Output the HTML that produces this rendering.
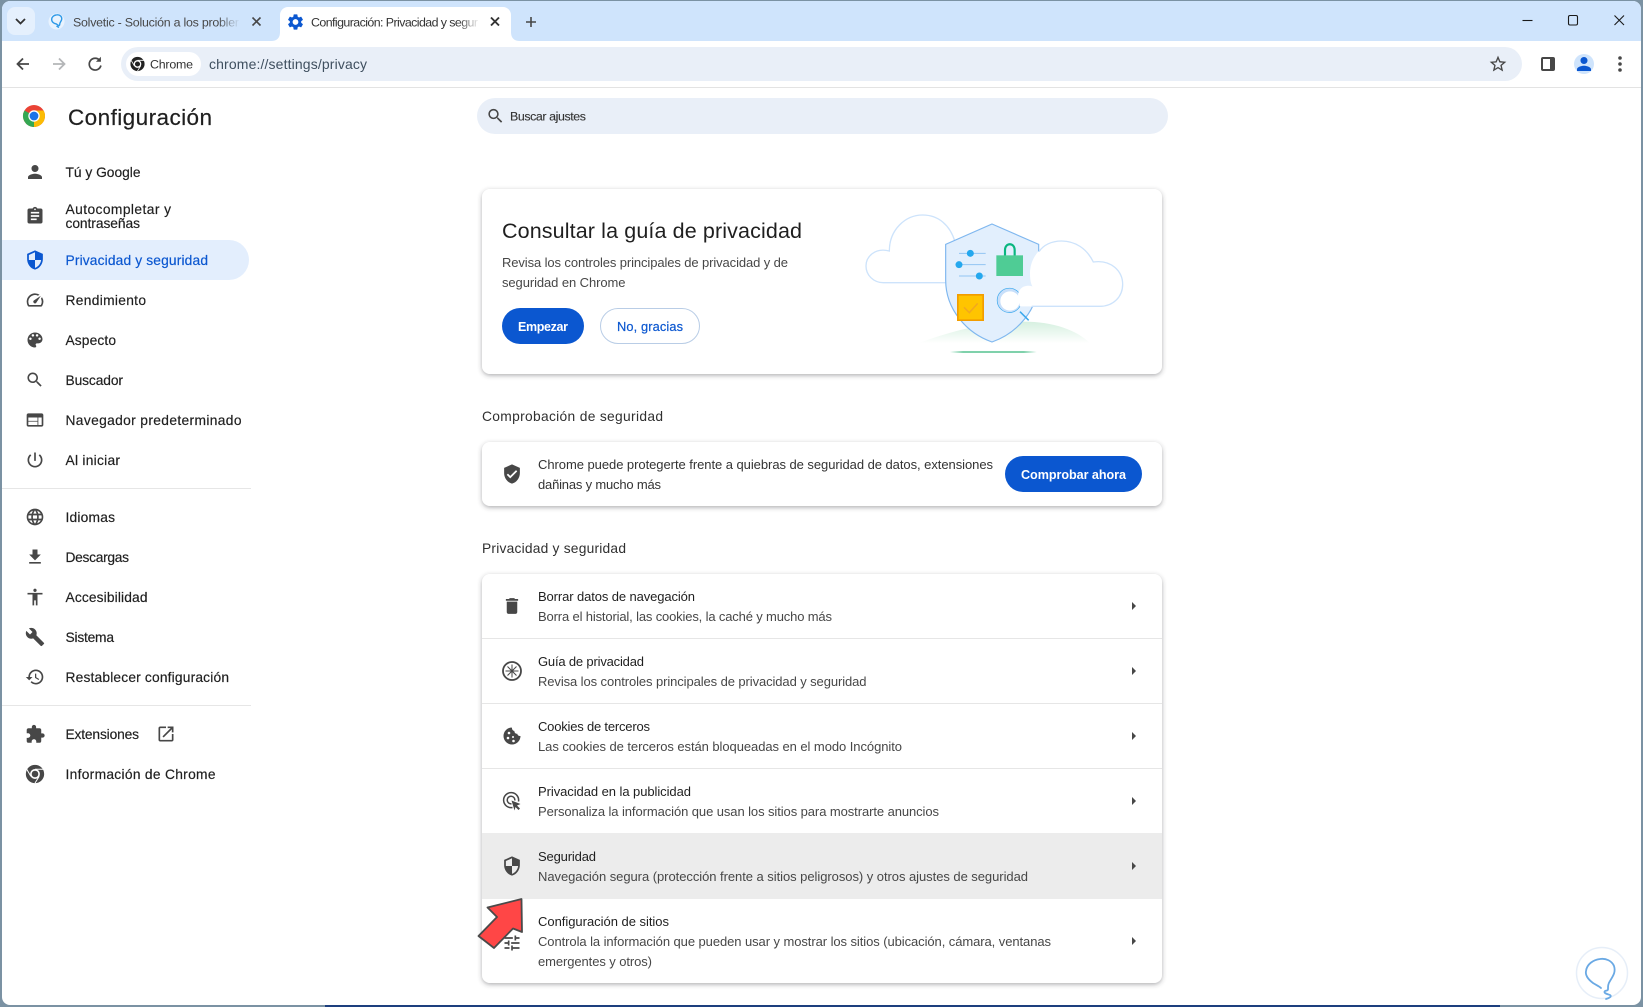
<!DOCTYPE html>
<html lang="es"><head><meta charset="utf-8"><title>Configuración</title>
<style>
html,body{margin:0;padding:0;background:#fff;width:1643px;height:1007px;overflow:hidden}
svg{display:block;position:absolute;left:0;top:0}
text{font-family:"Liberation Sans",Arial,sans-serif;font-size:13.4px;fill:#1f1f1f;white-space:pre}
.n{font-size:13.8px;fill:#1f1f1f;stroke:#1f1f1f;stroke-width:.18px}
.t{font-size:13px;fill:#1f1f1f}
.s{font-size:13px;fill:#474747}
.h{font-size:13.8px;fill:#303030}
.tab{font-size:12.4px;fill:#474747}
</style></head><body>
<svg width="1643" height="1007" viewBox="0 0 1643 1007" xmlns="http://www.w3.org/2000/svg">
<defs>
<filter id="sh" x="-5%" y="-10%" width="110%" height="125%"><feDropShadow dx="0" dy="1.5" stdDeviation="2.4" flood-color="#3c4043" flood-opacity=".42"/></filter>
<linearGradient id="fd1"><stop offset="0" stop-color="#cfe4fc" stop-opacity="0"/><stop offset="1" stop-color="#cfe4fc"/></linearGradient>
<linearGradient id="fd2"><stop offset="0" stop-color="#fff" stop-opacity="0"/><stop offset="1" stop-color="#fff"/></linearGradient>
<linearGradient id="hill" x1="0" y1="0" x2="0" y2="1"><stop offset="0" stop-color="#d6f0e0"/><stop offset="1" stop-color="#fff"/></linearGradient>
<linearGradient id="strip"><stop offset="0" stop-color="#7fd1ab" stop-opacity="0"/><stop offset=".15" stop-color="#7fd1ab"/><stop offset=".85" stop-color="#7fd1ab"/><stop offset="1" stop-color="#7fd1ab" stop-opacity="0"/></linearGradient>
<symbol id="person" viewBox="0 0 24 24"><path d="M12 12c2.21 0 4-1.79 4-4s-1.79-4-4-4-4 1.79-4 4 1.79 4 4 4zm0 2c-2.67 0-8 1.34-8 4v2h16v-2c0-2.66-5.33-4-8-4z"/></symbol>
<symbol id="assign" viewBox="0 0 24 24"><path d="M19 3h-4.18C14.4 1.84 13.3 1 12 1c-1.3 0-2.4.84-2.82 2H5c-1.1 0-2 .9-2 2v14c0 1.1.9 2 2 2h14c1.1 0 2-.9 2-2V5c0-1.1-.9-2-2-2zm-7 0c.55 0 1 .45 1 1s-.45 1-1 1-1-.45-1-1 .45-1 1-1zm2 14H7v-2h7v2zm3-4H7v-2h10v2zm0-4H7V7h10v2z"/></symbol>
<symbol id="shield" viewBox="0 0 24 24"><path d="M12 1L3 5v6c0 5.55 3.84 10.74 9 12 5.16-1.26 9-6.45 9-12V5l-9-4zm0 10.99h7c-.53 4.12-3.28 7.79-7 8.94V12H5V6.3l7-3.11v8.8z"/></symbol>
<symbol id="speed" viewBox="0 0 24 24"><path d="M20.38 8.57l-1.23 1.85a8 8 0 0 1-.22 7.58H5.07A8 8 0 0 1 15.58 6.85l1.85-1.23A10 10 0 0 0 3.35 19a2 2 0 0 0 1.72 1h13.85a2 2 0 0 0 1.74-1 10 10 0 0 0-.27-10.44zm-9.79 6.84a2 2 0 0 0 2.83 0l5.66-8.49-8.49 5.66a2 2 0 0 0 0 2.83z"/></symbol>
<symbol id="palette" viewBox="0 0 24 24"><path d="M12 3c-4.97 0-9 4.03-9 9s4.03 9 9 9c.83 0 1.5-.67 1.5-1.5 0-.39-.15-.74-.39-1.01-.23-.26-.38-.61-.38-.99 0-.83.67-1.5 1.5-1.5H16c2.76 0 5-2.24 5-5 0-4.42-4.03-8-9-8zm-5.5 9c-.83 0-1.5-.67-1.5-1.5S5.67 9 6.5 9 8 9.67 8 10.5 7.33 12 6.5 12zm3-4C8.67 8 8 7.33 8 6.5S8.67 5 9.5 5s1.5.67 1.5 1.5S10.33 8 9.5 8zm5 0c-.83 0-1.5-.67-1.5-1.5S13.67 5 14.5 5s1.5.67 1.5 1.5S15.33 8 14.5 8zm3 4c-.83 0-1.5-.67-1.5-1.5S16.67 9 17.5 9s1.5.67 1.5 1.5-.67 1.5-1.5 1.5z"/></symbol>
<symbol id="search" viewBox="0 0 24 24"><path d="M15.5 14h-.79l-.28-.27C15.41 12.59 16 11.11 16 9.5 16 5.91 13.09 3 9.5 3S3 5.91 3 9.5 5.91 16 9.5 16c1.61 0 3.09-.59 4.23-1.57l.27.28v.79l5 4.99L20.49 19l-4.99-5zm-6 0C7.01 14 5 11.99 5 9.5S7.01 5 9.5 5 14 7.01 14 9.5 11.99 14 9.5 14z"/></symbol>
<symbol id="web" viewBox="0 0 24 24"><path d="M20 4H4c-1.1 0-1.99.9-1.99 2L2 18c0 1.1.9 2 2 2h16c1.1 0 2-.9 2-2V6c0-1.1-.9-2-2-2zm-5 14H4v-4h11v4zm0-5H4V9h11v4zm5 5h-4V9h4v9z"/></symbol>
<symbol id="power" viewBox="0 0 24 24"><path d="M13 3h-2v10h2V3zm4.83 2.17l-1.42 1.42C17.99 7.86 19 9.81 19 12c0 3.87-3.13 7-7 7s-7-3.13-7-7c0-2.19 1.01-4.14 2.58-5.42L6.17 5.17C4.23 6.82 3 9.26 3 12c0 4.97 4.03 9 9 9s9-4.03 9-9c0-2.74-1.23-5.18-3.17-6.83z"/></symbol>
<symbol id="lang" viewBox="0 0 24 24"><path d="M11.99 2C6.47 2 2 6.48 2 12s4.47 10 9.99 10C17.52 22 22 17.52 22 12S17.52 2 11.99 2zm6.93 6h-2.95c-.32-1.25-.78-2.45-1.38-3.56 1.84.63 3.37 1.91 4.33 3.56zM12 4.04c.83 1.2 1.48 2.53 1.91 3.96h-3.82c.43-1.43 1.08-2.76 1.91-3.96zM4.26 14C4.1 13.36 4 12.69 4 12s.1-1.36.26-2h3.38c-.08.66-.14 1.32-.14 2 0 .68.06 1.34.14 2H4.26zm.82 2h2.95c.32 1.25.78 2.45 1.38 3.56-1.84-.63-3.37-1.9-4.33-3.56zm2.95-8H5.08c.96-1.66 2.49-2.93 4.33-3.56C8.81 5.55 8.35 6.75 8.03 8zM12 19.96c-.83-1.2-1.48-2.53-1.91-3.96h3.82c-.43 1.43-1.08 2.76-1.91 3.96zM14.34 14H9.66c-.09-.66-.16-1.32-.16-2 0-.68.07-1.35.16-2h4.68c.09.65.16 1.32.16 2 0 .68-.07 1.34-.16 2zm.25 5.56c.6-1.11 1.06-2.31 1.38-3.56h2.95c-.96 1.65-2.49 2.93-4.33 3.56zM16.36 14c.08-.66.14-1.32.14-2 0-.68-.06-1.34-.14-2h3.38c.16.64.26 1.31.26 2s-.1 1.36-.26 2h-3.38z"/></symbol>
<symbol id="dl" viewBox="0 0 24 24"><path d="M19 9h-4V3H9v6H5l7 7 7-7zM5 18v2h14v-2H5z"/></symbol>
<symbol id="acc" viewBox="0 0 24 24"><path d="M12 2c1.1 0 2 .9 2 2s-.9 2-2 2-2-.9-2-2 .9-2 2-2zm9 7h-6v13h-2v-6h-2v6H9V9H3V7h18v2z"/></symbol>
<symbol id="build" viewBox="0 0 24 24"><path d="M22.7 19l-9.1-9.1c.9-2.3.4-5-1.5-6.9-2-2-5-2.4-7.4-1.3L9 6 6 9 1.6 4.7C.4 7.1.9 10.1 2.9 12.1c1.9 1.9 4.6 2.4 6.9 1.5l9.1 9.1c.4.4 1 .4 1.4 0l2.3-2.3c.5-.4.5-1.1.1-1.4z"/></symbol>
<symbol id="restore" viewBox="0 0 24 24"><path d="M13 3c-4.97 0-9 4.03-9 9H1l3.89 3.89.07.14L9 12H6c0-3.87 3.13-7 7-7s7 3.13 7 7-3.13 7-7 7c-1.93 0-3.68-.79-4.94-2.06l-1.42 1.42C8.27 19.99 10.51 21 13 21c4.97 0 9-4.03 9-9s-4.03-9-9-9zm-1 5v5l4.28 2.54.72-1.21-3.5-2.08V8H12z"/></symbol>
<symbol id="ext" viewBox="0 0 24 24"><path d="M20.5 11H19V7c0-1.1-.9-2-2-2h-4V3.5C13 2.12 11.88 1 10.5 1S8 2.12 8 3.5V5H4c-1.1 0-1.99.9-1.99 2v3.8H3.5c1.49 0 2.7 1.21 2.7 2.7s-1.21 2.7-2.7 2.7H2V20c0 1.1.9 2 2 2h3.8v-1.5c0-1.49 1.21-2.7 2.7-2.7 1.49 0 2.7 1.21 2.7 2.7V22H17c1.1 0 2-.9 2-2v-4h1.5c1.38 0 2.5-1.12 2.5-2.5S21.88 11 20.5 11z"/></symbol>
<symbol id="open" viewBox="0 0 24 24"><path d="M19 19H5V5h7V3H5c-1.11 0-2 .9-2 2v14c0 1.1.89 2 2 2h14c1.1 0 2-.9 2-2v-7h-2v7zM14 3v2h3.59l-9.83 9.83 1.41 1.41L19 6.41V10h2V3h-7z"/></symbol>
<symbol id="del" viewBox="0 0 24 24"><path d="M6 19c0 1.1.9 2 2 2h8c1.1 0 2-.9 2-2V7H6v12zM19 4h-3.5l-1-1h-5l-1 1H5v2h14V4z"/></symbol>
<symbol id="ver" viewBox="0 0 24 24"><path d="M12 1L3 5v6c0 5.55 3.84 10.74 9 12 5.16-1.26 9-6.45 9-12V5l-9-4zm-2 16l-4-4 1.41-1.41L10 14.17l6.59-6.59L18 9l-8 8z"/></symbol>
<symbol id="tune" viewBox="0 0 24 24"><path d="M3 17v2h6v-2H3zM3 5v2h10V5H3zm10 16v-2h8v-2h-8v-2h-2v6h2zM7 9v2H3v2h4v2h2V9H7zm14 4v-2H11v2h10zm-6-4h2V7h4V5h-4V3h-2v6z"/></symbol>
<symbol id="star" viewBox="0 0 24 24"><path d="M22 9.24l-7.19-.62L12 2 9.19 8.63 2 9.24l5.46 4.73L5.82 21 12 17.27 18.18 21l-1.63-7.03L22 9.24zM12 15.4l-3.76 2.27 1-4.28-3.32-2.88 4.38-.38L12 6.1l1.71 4.04 4.38.38-3.32 2.88 1 4.28L12 15.4z"/></symbol>
<symbol id="gear" viewBox="0 0 24 24"><path d="M19.14 12.94c.04-.3.06-.61.06-.94 0-.32-.02-.64-.07-.94l2.03-1.58c.18-.14.23-.41.12-.61l-1.92-3.32c-.12-.22-.37-.29-.59-.22l-2.39.96c-.5-.38-1.03-.7-1.62-.94l-.36-2.54c-.04-.24-.24-.41-.48-.41h-3.84c-.24 0-.43.17-.47.41l-.36 2.54c-.59.24-1.13.57-1.62.94l-2.39-.96c-.22-.08-.47 0-.59.22L2.74 8.87c-.12.21-.08.47.12.61l2.03 1.58c-.05.3-.09.63-.09.94s.02.64.07.94l-2.03 1.58c-.18.14-.23.41-.12.61l1.92 3.32c.12.22.37.29.59.22l2.39-.96c.5.38 1.03.7 1.62.94l.36 2.54c.05.24.24.41.48.41h3.84c.24 0 .44-.17.47-.41l.36-2.54c.59-.24 1.13-.56 1.62-.94l2.39.96c.22.08.47 0 .59-.22l1.92-3.32c.12-.22.07-.47-.12-.61l-2.01-1.58zM12 15.6c-1.98 0-3.6-1.62-3.6-3.6s1.62-3.6 3.6-3.6 3.6 1.62 3.6 3.6-1.62 3.6-3.6 3.6z"/></symbol>
<symbol id="chromeg" viewBox="0 0 24 24"><circle cx="12" cy="12" r="10" fill="currentColor"/><circle cx="12" cy="12" r="5.4" fill="#fff"/><circle cx="12" cy="12" r="3.6" fill="currentColor"/><path d="M12 6.8h9M7.5 14.6L3 6.8M16.5 14.6L12 22" stroke="#fff" stroke-width="1.1" fill="none"/></symbol>
</defs>

<!-- window frame -->
<rect width="1643" height="1007" fill="#7b92a3"/>
<rect x="325" y="1004" width="1175" height="3" fill="#1d3f7e"/>
<path d="M10 1H1633a8 8 0 0 1 8 8V997a8 8 0 0 1-8 8H10a8 8 0 0 1-8-8V9a8 8 0 0 1 8-8z" fill="#fff"/>
<!-- tab strip -->
<path d="M10 1H1633a8 8 0 0 1 8 8V41H2V9a8 8 0 0 1 8-8z" fill="#cfe4fc"/>
<rect x="7" y="7" width="28" height="28" rx="8" fill="#e5f0fd"/>
<path d="M16 19l4.500 4.500 4.500-4.500" fill="none" stroke="#333" stroke-width="1.800"/>
<!-- tab1 -->
<circle cx="56.5" cy="21.5" r="8" fill="#e9f3fe"/>
<path d="M56 15c4-1 6.500 2 5.500 5-.5 1.500-1.800 2.500-1.800 4.500 0 1-.8 1.400-1.800 .6l-1.500-1.100c-3-.5-5-2.500-4.700-5 .2-2 2-3.700 4.300-4z M56.500 26l2.500 1.500" fill="none" stroke="#2f9ae8" stroke-width="1.400"/>
<text class="tab" x="73" y="26.500" textLength="166">Solvetic - Solución a los probler</text>
<rect x="218" y="10" width="22" height="24" fill="url(#fd1)"/>
<path d="M252.500 17.500l8 8m0-8l-8 8" stroke="#474747" stroke-width="1.600"/>
<!-- tab2 -->
<path d="M271 41c6 0 9-3 9-9V15a8 8 0 0 1 8-8h215a8 8 0 0 1 8 8v17c0 6 3 9 9 9z" fill="#fff"/>
<use href="#gear" x="286" y="12.500" width="19" height="19" fill="#0b57d0"/>
<text class="tab" x="311" y="26.500" style="fill:#333" textLength="167">Configuración: Privacidad y segur</text>
<rect x="458" y="10" width="22" height="24" fill="url(#fd2)"/>
<path d="M491 17.500l8 8m0-8l-8 8" stroke="#333" stroke-width="1.900"/>
<path d="M531 17v10M526 22h10" stroke="#474747" stroke-width="1.600"/>
<!-- win controls -->
<path d="M1522.500 20.500h10" stroke="#1a1a1a" stroke-width="1.100"/>
<rect x="1568.500" y="15.500" width="9" height="9.500" rx="1.500" fill="none" stroke="#1a1a1a" stroke-width="1.100"/>
<path d="M1614.500 15.500l9.500 9.500m0-9.500l-9.500 9.500" stroke="#1a1a1a" stroke-width="1.100"/>
<!-- toolbar -->
<path d="M2 49a8 8 0 0 1 8-8H1633a8 8 0 0 1 8 8V87H2z" fill="#fff"/>
<rect x="2" y="87" width="1639" height="1" fill="#e3e3e3"/>
<path d="M29 64H18M23 58.500L17.500 64l5.500 5.500" fill="none" stroke="#474747" stroke-width="1.800"/>
<path d="M53 64h11M59 58.500l5.500 5.500-5.500 5.500" fill="none" stroke="#b4b6b8" stroke-width="1.800"/>
<path d="M99.800 60.500A5.900 5.900 0 1 0 100.900 65.500" fill="none" stroke="#474747" stroke-width="1.700"/><path d="M100.900 56.800v5h-5z" fill="#474747"/>
<rect x="121" y="47" width="1401" height="34" rx="17" fill="#e9eff8"/>
<rect x="126" y="52" width="75" height="24" rx="12" fill="#fff"/>
<use href="#chromeg" x="129" y="55.500" width="17" height="17" style="color:#222"/>
<text x="150" y="68.500" style="font-size:12.400px;fill:#333" textLength="43">Chrome</text>
<text x="209" y="69" style="font-size:14px;fill:#3f4f5f" textLength="158">chrome://settings/privacy</text>
<use href="#star" x="1488" y="54" width="20" height="20" fill="#474747"/>
<path d="M1541 59a2 2 0 0 1 2-2h10a2 2 0 0 1 2 2v10a2 2 0 0 1-2 2h-10a2 2 0 0 1-2-2z" fill="#474747"/><rect x="1543" y="59" width="7" height="10" fill="#fff"/>
<circle cx="1584" cy="64" r="10" fill="#cfe4fc"/><use href="#person" x="1573.500" y="53.500" width="21" height="21" fill="#0b57d0"/>
<circle cx="1620" cy="58" r="1.800" fill="#474747"/><circle cx="1620" cy="64" r="1.800" fill="#474747"/><circle cx="1620" cy="70" r="1.800" fill="#474747"/>

<!-- header -->
<circle cx="34" cy="116" r="11" fill="#ea4335"/>
<path d="M34 116L24.500 121.500A11 11 0 0 0 34 127z" fill="#34a853"/><path d="M24.500 110.500A11 11 0 0 0 24.500 121.500L29.500 119 34 116z" fill="#34a853"/>
<path d="M34 116V127A11 11 0 0 0 45 116c0-2-.5-3.800-1.500-5.500H34z" fill="#fbbc04"/>
<circle cx="34" cy="116" r="5.700" fill="#fff"/><circle cx="34" cy="116" r="4.400" fill="#1a73e8"/>
<text x="68" y="125" style="font-size:22.500px;fill:#1f1f1f;stroke:#1f1f1f;stroke-width:.2px" textLength="144">Configuración</text>
<rect x="477" y="98" width="691" height="36" rx="18" fill="#e9eff8"/>
<use href="#search" x="486" y="106.500" width="19" height="19" fill="#474747"/>
<text x="510" y="120.500" style="font-size:12.400px;fill:#333;stroke:#333;stroke-width:.12px" textLength="76">Buscar ajustes</text>

<!-- sidebar -->
<path d="M2 240H229a20 20 0 0 1 0 40H2z" fill="#e3eefd"/>
<use href="#person" x="24.500" y="161.500" width="21" height="21" fill="#474747"/>
<text class="n" x="65.500" y="177" textLength="75">Tú y Google</text>
<use href="#assign" x="25" y="206" width="20" height="20" fill="#474747"/>
<text class="n" x="65.500" y="214" textLength="105.500">Autocompletar y</text>
<text class="n" x="65.500" y="228" textLength="74.500">contraseñas</text>
<use href="#shield" x="24.500" y="249.500" width="21" height="21" fill="#0b57d0"/>
<text class="n" x="65.500" y="265" style="fill:#0b57d0;stroke:#0b57d0" textLength="142.500">Privacidad y seguridad</text>
<use href="#speed" x="25" y="290" width="20" height="20" fill="#474747"/>
<text class="n" x="65.500" y="305" textLength="80.500">Rendimiento</text>
<use href="#palette" x="25" y="330" width="20" height="20" fill="#474747"/>
<text class="n" x="65.500" y="345" textLength="50.500">Aspecto</text>
<use href="#search" x="25" y="370" width="19.500" height="19.500" fill="#474747"/>
<text class="n" x="65.500" y="385" textLength="57.500">Buscador</text>
<use href="#web" x="25" y="410" width="20" height="20" fill="#474747"/>
<text class="n" x="65.500" y="425" textLength="176">Navegador predeterminado</text>
<use href="#power" x="25" y="450" width="20" height="20" fill="#474747"/>
<text class="n" x="65.500" y="465" textLength="54.500">Al iniciar</text>
<rect x="2" y="488" width="249" height="1" fill="#e6e6e6"/>
<use href="#lang" x="25" y="507" width="20" height="20" fill="#474747"/>
<text class="n" x="65.500" y="522" textLength="49.500">Idiomas</text>
<use href="#dl" x="25" y="547" width="20" height="20" fill="#474747"/>
<text class="n" x="65.500" y="562" textLength="63.500">Descargas</text>
<use href="#acc" x="25" y="587" width="20" height="20" fill="#474747"/>
<text class="n" x="65.500" y="602" textLength="82">Accesibilidad</text>
<use href="#build" x="25" y="627" width="20" height="20" fill="#474747"/>
<text class="n" x="65.500" y="642" textLength="48.500">Sistema</text>
<use href="#restore" x="25" y="667" width="20" height="20" fill="#474747"/>
<text class="n" x="65.500" y="682" textLength="163.500">Restablecer configuración</text>
<rect x="2" y="705" width="249" height="1" fill="#e6e6e6"/>
<use href="#ext" x="25" y="724" width="20.500" height="20.500" fill="#474747"/>
<text class="n" x="65.500" y="739" textLength="73.500">Extensiones</text>
<use href="#open" x="156" y="724" width="20" height="20" fill="#474747"/>
<use href="#chromeg" x="24" y="763" width="22" height="22" style="color:#474747"/>
<text class="n" x="65.500" y="779" textLength="150">Información de Chrome</text>

<!-- card 1 -->
<rect x="482" y="189" width="680" height="185" rx="8" fill="#fff" filter="url(#sh)"/>
<text x="502" y="238" style="font-size:21.500px;fill:#1f1f1f" textLength="300">Consultar la guía de privacidad</text>
<text class="s" x="502" y="267" textLength="286">Revisa los controles principales de privacidad y de</text>
<text class="s" x="502" y="287" textLength="123.500">seguridad en Chrome</text>
<rect x="502" y="308" width="82" height="36" rx="18" fill="#0b57d0"/>
<text x="518" y="331" style="font-size:12.500px;fill:#fff;font-weight:bold" textLength="50">Empezar</text>
<rect x="600.500" y="308.500" width="99" height="35" rx="17.500" fill="#fff" stroke="#b9cde6"/>
<text x="617" y="331" style="font-size:12.800px;fill:#0b57d0;stroke:#0b57d0;stroke-width:.2px" textLength="66">No, gracias</text>
<!-- illustration -->
<g transform="translate(840 190) scale(.33333)">
<path d="M340 278H130C100 278 78 255 78 228 78 200 105 172 148 183 148 120 195 75 248 75 295 75 330 105 345 155" fill="#fff" stroke="#cde3fb" stroke-width="4"/>
<path d="M235 460C340 420 450 395 550 395 640 395 710 420 750 460Z" fill="url(#hill)"/>
<rect x="330" y="483" width="260" height="6" fill="url(#strip)"/>
<path d="M456 102L596 163V270C596 360 530 430 456 456 382 430 317 360 317 270V163Z" fill="#e2effd" stroke="#7fb7ef" stroke-width="3.500"/>
<path d="M357 190H437M347 224H437M357 258H437" stroke="#93c5f3" stroke-width="3"/>
<circle cx="391" cy="190" r="10.500" fill="#25a8ee"/><circle cx="357" cy="224" r="10.500" fill="#25a8ee"/><circle cx="418" cy="258" r="10.500" fill="#25a8ee"/>
<path d="M495 197V180C495 157 524 157 524 180V197" fill="none" stroke="#09b67f" stroke-width="6.500"/>
<rect x="469" y="196" width="80" height="62" fill="#4fcc95"/>
<rect x="353.500" y="314.500" width="76" height="76" fill="#ffc400" stroke="#f29d00" stroke-width="5"/>
<path d="M372 352l16 16 25-28" fill="none" stroke="#f2a81e" stroke-width="4.500"/>
<path d="M540 365L566 391" stroke="#3aa8ec" stroke-width="4.500"/>
<circle cx="508" cy="331" r="36.500" fill="#c8dffa" stroke="#3aa8ec" stroke-width="2"/>
<circle cx="510" cy="333" r="29" fill="#fff"/>
<path d="M540 349H780C820 349 848 320 848 283 848 245 815 208 760 216 740 175 705 153 665 153 615 153 570 195 570 250 570 275 575 290 580 290 550 280 530 300 535 325 538 340 540 349 540 349Z" fill="#fff"/>
<path d="M575 349H780C820 349 848 320 848 283 848 245 815 208 760 216 740 175 705 153 665 153 635 153 610 165 597 185" fill="none" stroke="#cde3fb" stroke-width="4"/>
</g>

<!-- security check -->
<text class="h" x="482" y="421" textLength="181">Comprobación de seguridad</text>
<rect x="482" y="442" width="680" height="64" rx="8" fill="#fff" filter="url(#sh)"/>
<use href="#ver" x="501.500" y="463.500" width="21" height="21" fill="#474747"/>
<text class="s" x="538" y="469" style="fill:#333" textLength="455">Chrome puede protegerte frente a quiebras de seguridad de datos, extensiones</text>
<text class="s" x="538" y="489" style="fill:#333" textLength="123">dañinas y mucho más</text>
<rect x="1005" y="456" width="137" height="36" rx="18" fill="#0b57d0"/>
<text x="1021" y="479" style="font-size:12.600px;fill:#fff;font-weight:bold" textLength="105">Comprobar ahora</text>

<!-- privacy list -->
<text class="h" x="482" y="553" textLength="144">Privacidad y seguridad</text>
<rect x="482" y="574" width="680" height="409" rx="8" fill="#fff" filter="url(#sh)"/>
<rect x="482" y="638" width="680" height="1" fill="#e6e6e6"/>
<rect x="482" y="703" width="680" height="1" fill="#e6e6e6"/>
<rect x="482" y="768" width="680" height="1" fill="#e6e6e6"/>
<rect x="482" y="833" width="680" height="66" fill="#ececec"/>

<use href="#del" x="501.500" y="595.500" width="21" height="21" fill="#474747"/>
<text class="t" x="538" y="601" textLength="157">Borrar datos de navegación</text>
<text class="s" x="538" y="621" textLength="294">Borra el historial, las cookies, la caché y mucho más</text>

<circle cx="512" cy="671" r="9" fill="none" stroke="#474747" stroke-width="1.800"/>
<circle cx="512" cy="671" r="1.500" fill="#474747"/>
<path d="M512 664.500v13M505.500 671h13M507.500 666.500l9 9M516.500 666.500l-9 9" stroke="#474747" stroke-width="1"/>
<text class="t" x="538" y="666" textLength="106">Guía de privacidad</text>
<text class="s" x="538" y="686" textLength="328.500">Revisa los controles principales de privacidad y seguridad</text>

<path d="M512 727.500a8.500 8.500 0 1 0 8.500 8.500c-1.800.2-3-.8-3.200-2.300-1.700.2-3-1.100-2.900-2.800-1.500-.2-2.600-1.500-2.400-3.400z" fill="#474747"/>
<circle cx="509" cy="733" r="1.300" fill="#fff"/><circle cx="508" cy="738" r="1.300" fill="#fff"/><circle cx="513" cy="737" r="1" fill="#fff"/><circle cx="513.500" cy="741" r="1.300" fill="#fff"/>
<text class="t" x="538" y="731" textLength="112">Cookies de terceros</text>
<text class="s" x="538" y="751" textLength="364">Las cookies de terceros están bloqueadas en el modo Incógnito</text>

<path d="M518.500 801.500A7.500 7.500 0 1 0 512.500 807.500" fill="none" stroke="#474747" stroke-width="1.500"/>
<path d="M514.800 800.500A3.800 3.800 0 1 0 511.500 803.800" fill="none" stroke="#474747" stroke-width="1.500"/>
<path d="M511.500 800.500l9 3.500-3.500 1.500 3 3-1.500 1.500-3-3-1 3.500z" fill="#474747"/>
<text class="t" x="538" y="796" textLength="153">Privacidad en la publicidad</text>
<text class="s" x="538" y="816" textLength="401">Personaliza la información que usan los sitios para mostrarte anuncios</text>

<use href="#shield" x="501.500" y="855.500" width="21" height="21" fill="#474747"/>
<text class="t" x="538" y="861" textLength="58">Seguridad</text>
<text class="s" x="538" y="881" textLength="490">Navegación segura (protección frente a sitios peligrosos) y otros ajustes de seguridad</text>

<use href="#tune" x="502" y="933" width="20" height="20" fill="#474747"/>
<text class="t" x="538" y="926" textLength="131">Configuración de sitios</text>
<text class="s" x="538" y="946" textLength="513">Controla la información que pueden usar y mostrar los sitios (ubicación, cámara, ventanas</text>
<text class="s" x="538" y="966" textLength="114">emergentes y otros)</text>

<path d="M1132 602l4 4-4 4zM1132 667l4 4-4 4zM1132 732l4 4-4 4zM1132 797l4 4-4 4zM1132 862l4 4-4 4zM1132 937l4 4-4 4z" fill="#474747"/>

<!-- arrow -->
<path d="M521.500 899L487.500 907.500 497 917 478.500 936 494 948 513 928.500 522 932Z" fill="#ff4646" stroke="#4a4a4a" stroke-width="1.800" stroke-linejoin="round"/>

<!-- watermark -->
<circle cx="1602" cy="973" r="25.500" fill="#fff" stroke="#e6eef8" stroke-width="1.500"/>
<path d="M1606 999c4-1 6-3 4-4-3-1-7-2-5-4 2-1 3 0 3-2 0-3 0-5 2-8 3-5 6-9 4-15-2-5-8-8-14-7-7 1-13 5-14 12-1 5 3 9 7 12 3 2 6 3 8 5" fill="none" stroke="#6aa9e4" stroke-width="1.800" stroke-linecap="round"/>
</svg>
</body></html>
